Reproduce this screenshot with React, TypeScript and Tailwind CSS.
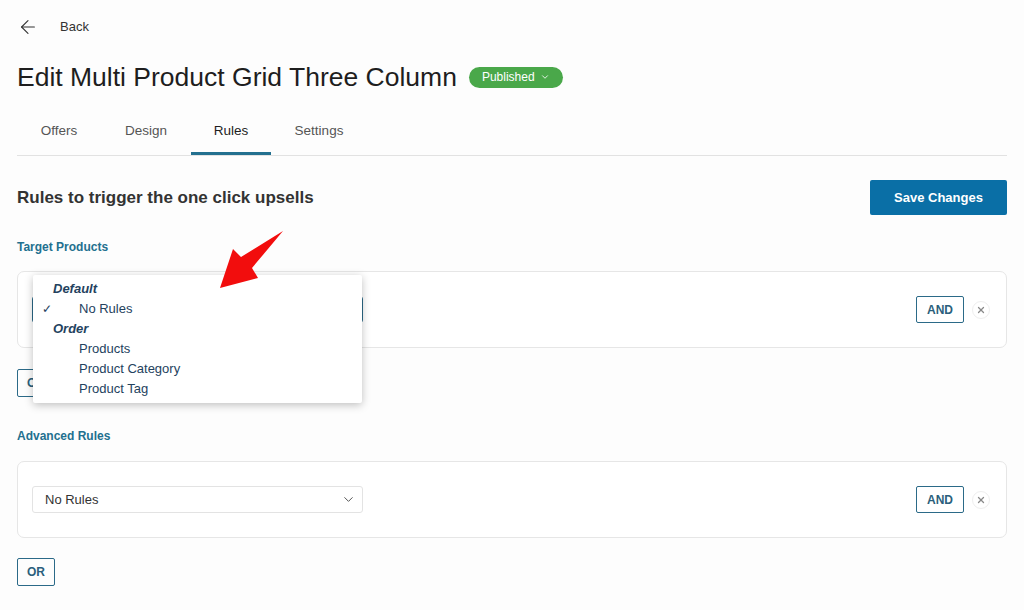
import { ArrowLeft, ChevronDown, X } from "lucide-react"

const font = { fontFamily: '"Liberation Sans", Arial, sans-serif' }

function RuleBox({
  children,
  value,
  focused = false,
}: {
  children?: React.ReactNode
  value: string
  focused?: boolean
}) {
  return (
    <div className="relative flex h-[77px] items-center rounded-[7px] border border-[#e6e6e6] bg-white pl-[14px] pr-[16px]">
      <div
        className={`flex h-[27px] w-[331px] items-center justify-between rounded-[3px] border bg-white pl-[12px] pr-[6px] text-[13px] text-[#333] ${
          focused ? "border-[#2b6a88]" : "border-[#e3e3e3]"
        }`}
      >
        {/* value sits under the open menu, so hide it while open */}
        <span className={focused ? "invisible" : ""}>{value}</span>
        <ChevronDown size={15} strokeWidth={1.6} className="text-[#555]" />
      </div>
      <div className="ml-auto flex items-center gap-[8px]">
        <button className="flex h-[27px] w-[48px] items-center justify-center rounded-[2px] border border-[#2b6a88] text-[12px] font-bold text-[#2b5f7c]">
          AND
        </button>
        <span className="flex h-[18px] w-[18px] items-center justify-center rounded-full border border-[#eee] text-[#888]">
          <X size={10} strokeWidth={3} />
        </span>
      </div>
      {children}
    </div>
  )
}

function Dropdown() {
  const item = "h-[20px] flex items-center"
  return (
    <div className="absolute left-[15px] top-[3px] z-10 w-[329px] rounded-[2px] bg-white py-[4px] text-[13px] text-[#24425e] shadow-[0_2px_8px_rgba(0,0,0,0.25)]">
      <div className={`${item} pl-[20px] font-bold italic`}>Default</div>
      <div className={`${item} pl-[9px]`}>
        <span className="w-[37px] shrink-0 text-[12px] leading-none">✓</span>
        <span>No Rules</span>
      </div>
      <div className={`${item} pl-[20px] font-bold italic`}>Order</div>
      <div className={`${item} pl-[46px]`}>Products</div>
      <div className={`${item} pl-[46px]`}>Product Category</div>
      <div className={`${item} pl-[46px]`}>Product Tag</div>
    </div>
  )
}

export default function App() {
  return (
    <div className="relative h-[610px] w-[1024px] overflow-hidden bg-[#fdfdfd]" style={font}>
      <div className="px-[17px]">
        <div className="flex h-[54px] items-center gap-[21px]">
          <ArrowLeft size={22} strokeWidth={1.2} className="text-[#333]" />
          <span className="text-[13px] text-[#333]">Back</span>
        </div>

        <div className="mt-[8px] flex items-center gap-[12px]">
          <h1 className="text-[26.5px] leading-[30px] text-[#1e1e1e]">Edit Multi Product Grid Three Column</h1>
          <span className="flex h-[21px] items-center gap-[5px] rounded-full bg-[#4aa84a] px-[13px] text-[12px] text-white">
            Published
            <ChevronDown size={10} strokeWidth={2} />
          </span>
        </div>

        <div className="mt-[15px] flex h-[49px] border-b border-[#e2e2e2] text-[13.5px] text-[#555]">
          <div className="flex w-[84px] items-center justify-center">Offers</div>
          <div className="flex w-[90px] items-center justify-center">Design</div>
          <div className="flex w-[80px] items-center justify-center border-b-[3px] border-[#23708f] pt-[3px] text-[#1e1e1e]">
            Rules
          </div>
          <div className="flex w-[96px] items-center justify-center">Settings</div>
        </div>

        <div className="mt-[24px] flex h-[35px] items-center justify-between">
          <h2 className="text-[17px] font-bold text-[#333]">Rules to trigger the one click upsells</h2>
          <button className="h-[35px] w-[137px] rounded-[2px] bg-[#0a6fa6] text-[13px] font-bold text-white">
            Save Changes
          </button>
        </div>

        <div className="mt-[23px] text-[12px] font-bold text-[#23708f]">Target Products</div>

        <div className="mt-[15px]">
          <RuleBox value="No Rules" focused>
            <Dropdown />
          </RuleBox>
        </div>

        <button className="mt-[21px] h-[28px] w-[38px] rounded-[2px] border border-[#2b6a88] text-[12px] font-bold text-[#2b5f7c]">
          OR
        </button>

        <div className="mt-[30px] text-[12px] font-bold text-[#23708f]">Advanced Rules</div>

        <div className="mt-[16px]">
          <RuleBox value="No Rules" />
        </div>

        <button className="mt-[20px] h-[28px] w-[38px] rounded-[2px] border border-[#2b6a88] text-[12px] font-bold text-[#2b5f7c]">
          OR
        </button>
      </div>

      <svg className="absolute left-[210px] top-[225px] z-20" width="80" height="70" viewBox="210 225 80 70">
        <polygon points="220,288 233,249 241,257 283,231 252,268 258,278" fill="#f20d0d" />
      </svg>
    </div>
  )
}
